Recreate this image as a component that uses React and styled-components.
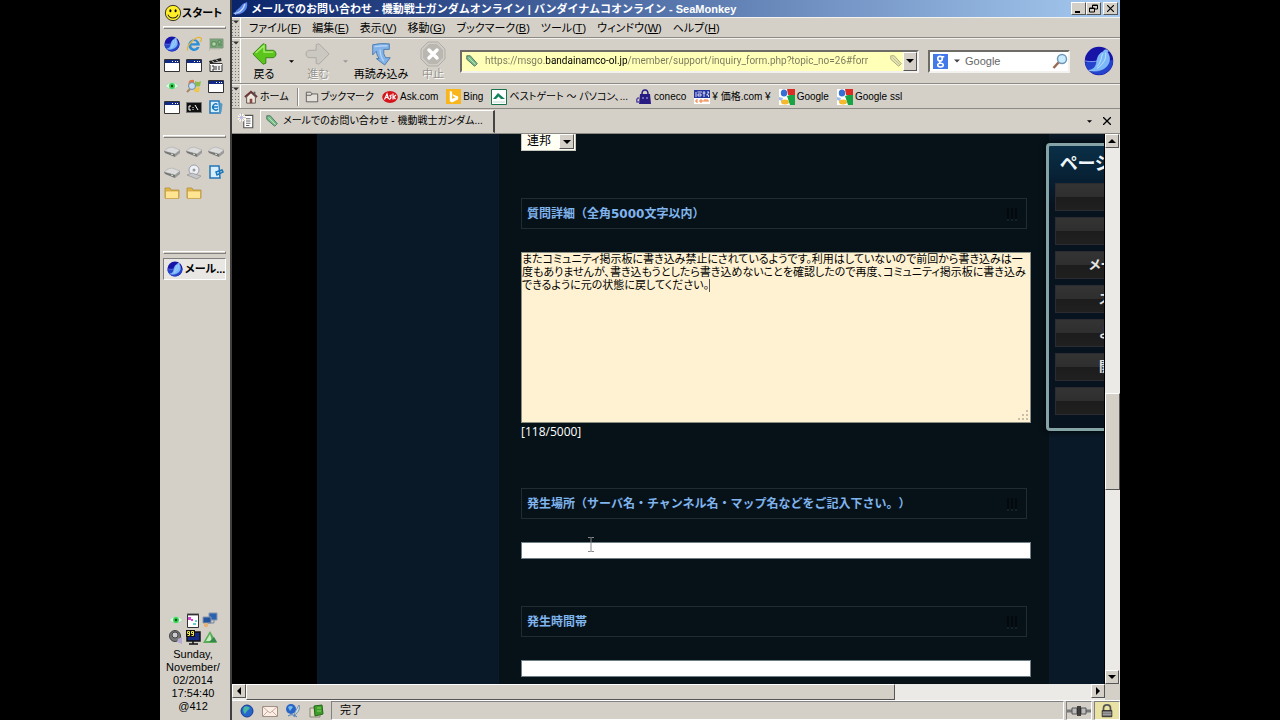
import React from "react";
import styled, { createGlobalStyle, css } from "styled-components";

const GlobalStyle = createGlobalStyle`
  * {
    box-sizing: border-box;
  }

  body {
    margin: 0;
    background: #000;
    color: #000;
    font-family: "Liberation Sans", "Noto Sans CJK JP", sans-serif;
    font-size: 11px;
    line-height: 14px;
    font-feature-settings: "palt";
  }

  button, input, select, textarea {
    margin: 0;
    padding: 0;
    border: 0;
    border-radius: 0;
    background: none;
    color: inherit;
    font: inherit;
    font-feature-settings: inherit;
  }

  a {
    color: inherit;
    text-decoration: none;
  }

  svg {
    display: block;
    flex: none;
  }
`;

const raised = css`
  border: 1px solid;
  border-color: #fff #555 #555 #fff;
  background: #d4d0c8;
`;

const sunken = css`
  border: 1px solid;
  border-color: #808080 #fff #fff #808080;
`;

const Screen = styled.div`
  display: flex;
  width: 75%;
  height: 100vh;
  margin: 0 auto;
  background: #d4d0c8;
  overflow: hidden;
`;

/* ---------- desktop bar ---------- */

const Sidebar = styled.aside`
  display: flex;
  flex-direction: column;
  flex: none;
  width: 72px;
  padding: 0 4px 7px 3px;
  border-right: 2px solid #404040;
`;

const StartButton = styled.button`
  display: flex;
  align-items: center;
  height: 26px;
  padding-left: 1px;
  font-weight: bold;
  white-space: nowrap;
`;

const Ridge = styled.hr`
  width: 100%;
  height: 3px;
  margin: 0;
  border: 1px solid;
  border-color: #fff #808080 #808080 #fff;
`;

const IconGrid = styled.div`
  display: grid;
  grid-template-columns: repeat(3, 16px);
  gap: 5px 6px;
  align-content: start;
  height: ${props => props.$height};
  padding: ${props => props.$top} 0 0 1px;

  button {
    height: 16px;
  }
`;

const TaskButton = styled.button`
  ${sunken}
  display: flex;
  align-items: center;
  gap: 2px;
  height: 22px;
  margin-top: 4px;
  padding-left: 3px;
  background: #e9e7e3;
  font-weight: bold;
  white-space: nowrap;
`;

const Tray = styled.div`
  display: grid;
  grid-template-columns: repeat(3, 16px);
  justify-content: center;
  gap: 1px;
  margin: auto 3px 0 0;
`;

const Clock = styled.div`
  margin: 3px 3px 0 0;
  line-height: 13px;
  text-align: center;
`;

/* ---------- browser chrome ---------- */

const Browser = styled.div`
  display: flex;
  flex-direction: column;
  flex: 1;
  min-width: 0;
`;

const TitleBar = styled.header`
  display: flex;
  align-items: center;
  flex: none;
  height: 17px;
  gap: 2px;
  padding: 0 2px 0 1px;
  background: linear-gradient(90deg, #0a246a, #a6caf0);
  color: #fff;

  h1 {
    flex: 1;
    margin: 0;
    font-size: 11px;
    font-weight: bold;
    font-feature-settings: normal;
    line-height: 16px;
    white-space: nowrap;
  }
`;

const WindowButton = styled.button`
  ${raised}
  display: flex;
  align-items: center;
  justify-content: center;
  width: 15px;
  height: 13px;
  color: #000;
  margin-left: ${props => (props.$apart ? "0" : "-2px")};
`;

const Bar = styled.div`
  display: flex;
  align-items: center;
  flex: none;
  height: ${props => props.$height};
  border-top: 1px solid #f4f2ee;
  border-bottom: 1px solid #8c8a84;
  white-space: nowrap;
`;

const GripBox = styled.span`
  align-self: stretch;
  flex: none;
  width: 9px;
  margin-right: 3px;
  border-right: 1px solid #fff;
  background: radial-gradient(circle, #777 30%, transparent 35%) 2px 4px / 3px 3px;

  svg {
    margin: 1px 0 0 1px;
    background: #d4d0c8;
  }
`;

const MenuItem = styled.button`
  height: 18px;
  padding: 0 6px 0 5px;

  u {
    text-underline-offset: 1px;
  }
`;

const ToolButton = styled.button`
  display: flex;
  flex-direction: column;
  align-items: center;
  flex: none;
  width: ${props => props.$width};
  color: ${props => (props.disabled ? "#96938c" : "#000")};
  text-shadow: ${props => (props.disabled ? "1px 1px #fff" : "none")};
  line-height: 14px;
`;

const DropButton = styled.button`
  display: flex;
  align-items: center;
  justify-content: center;
  flex: none;
  width: ${props => props.$width || "14px"};
  height: 24px;
`;

const FieldBox = styled.div`
  display: flex;
  align-items: center;
  flex: ${props => (props.$grow ? "1" : "none")};
  min-width: 0;
  width: ${props => props.$width};
  height: 23px;
  margin-left: ${props => props.$left};
  padding-left: 3px;
  border: 2px solid;
  border-color: #6e6c67 #f4f2ee #f4f2ee #6e6c67;
  background: ${props => (props.$secure ? "#ffffb7" : "#fff")};
  overflow: hidden;
`;

const AddressInput = styled.input`
  flex: 1;
  min-width: 0;
  margin-left: 6px;
  background: linear-gradient(90deg, #77775c 60px, #000 60px, #000 142px, #77775c 142px);
  background-clip: text;
  -webkit-background-clip: text;
  color: transparent;
  font-family: Roboto, sans-serif;
  font-size: 10px;
  outline: 0;
`;

const SearchInput = styled.input`
  flex: 1;
  min-width: 0;
  outline: 0;

  &::placeholder {
    color: #666;
    opacity: 1;
  }
`;

const ArrowButton = styled.button`
  ${raised}
  display: flex;
  align-items: center;
  justify-content: center;
  flex: none;
  width: 14px;
  height: ${props => props.$height || "14px"};
`;

const Throbber = styled.a`
  flex: none;
  margin: 0 6px 0 14px;
`;

const Bookmark = styled.a`
  display: flex;
  align-items: center;
  gap: 2px;
  margin-right: 8px;
  font-size: 10px;
`;

const Divider = styled.span`
  flex: none;
  width: 2px;
  height: 18px;
  margin-right: 6px;
  border-left: 1px solid #8c8a84;
  border-right: 1px solid #fff;
`;

const TabBar = styled.div`
  display: flex;
  align-items: center;
  flex: none;
  height: 25px;
  padding: 0 4px 0 5px;
  border-bottom: 1px solid #8c8a84;
`;

const Tab = styled.button`
  display: flex;
  align-items: center;
  gap: 4px;
  width: 235px;
  height: 23px;
  margin: 0 auto 0 5px;
  padding-left: 4px;
  border: 1px solid;
  border-color: #fff #444 transparent #fff;
  border-right-width: 2px;
  font-size: 10px;
  white-space: nowrap;
`;

/* ---------- web page ---------- */

const Viewport = styled.div`
  display: grid;
  grid-template-columns: 1fr 15px;
  grid-template-rows: 1fr 16px;
  flex: 1;
  min-height: 0;
`;

const Page = styled.main`
  position: relative;
  display: flex;
  min-width: 0;
  min-height: 0;
  background: #0a1927;
  border-left: 85px solid #000;
  border-right: 1px solid #000;
  overflow: hidden;
`;

const Column = styled.form`
  flex: 1;
  min-width: 0;
  margin: 0 55px 0 182px;
  padding: 0 18px 0 22px;
  background: #071218;
  box-shadow: 0 0 1px #132130;
`;

const SelectBox = styled.div`
  position: relative;
  width: 55px;
  height: 17px;
  border: 1px solid #c8c8c0;
  border-top: 0;
  background: #fffff4;

  select {
    display: block;
    width: 100%;
    height: 14px;
    padding-left: 5px;
    appearance: none;
    font-size: 12px;
    line-height: 14px;
    outline: 0;
  }

  span {
    ${raised}
    position: absolute;
    top: 0;
    right: 1px;
    bottom: 1px;
    display: flex;
    align-items: center;
    justify-content: center;
    width: 15px;
    pointer-events: none;
  }
`;

const Section = styled.section`
  margin-top: 47px;
`;

const Heading = styled.label`
  display: flex;
  align-items: center;
  justify-content: space-between;
  height: 31px;
  margin: 0 4px 23px 0;
  padding: 0 7px 0 5px;
  border: 1px solid #1f2d33;
  color: #80b4ee;
  font-family: "DejaVu Sans", "Noto Sans CJK JP", sans-serif;
  font-feature-settings: normal;
  text-spacing-trim: space-all;
  font-size: 12px;
  font-weight: bold;
`;

const TextField = styled.input`
  display: block;
  width: 100%;
  height: 17px;
  padding: 0 2px;
  background: #fff;
  outline: 1px solid #6f7f88;
  outline-offset: -1px;
`;

const FieldWrap = styled.div`
  position: relative;
`;

const Pointer = styled.svg`
  position: absolute;
  top: -6px;
  left: 66px;
`;

const Caret = styled.span`
  position: absolute;
  top: 27px;
  left: 188px;
  width: 1px;
  height: 13px;
  background: #555;
`;

const Details = styled.textarea`
  display: block;
  width: 100%;
  height: 171px;
  padding: 0;
  border: 1px solid #8a8f86;
  background: #fff2d2;
  line-height: 13px;
  white-space: pre;
  resize: none;
  outline: 0;
  overflow: hidden;
`;

const ResizeMark = styled.svg`
  position: absolute;
  right: 2px;
  bottom: 2px;
`;

const Counter = styled.p`
  height: 18px;
  margin: 0;
  color: #fff;
  font-family: "Open Sans", sans-serif;
  font-size: 12px;
  line-height: 18px;
`;

const SideMenu = styled.nav`
  position: absolute;
  top: 9px;
  right: 0;
  width: 58px;
  height: 288px;
  padding: 1px 0 0 6px;
  border: 3px solid #86a3a5;
  border-right: 0;
  border-radius: 4px 0 0 4px;
  background: linear-gradient(#0a3047, #071c2f 40px, #07131e 60px);
  box-shadow: 0 0 4px 2px #030b10;
  overflow: hidden;

  h2 {
    height: 36px;
    margin: 0 0 0 5px;
    color: #eef6fa;
    font-size: 18px;
    line-height: 34px;
    white-space: nowrap;
  }
`;

const SideLink = styled.a`
  display: block;
  height: 28px;
  margin-bottom: 6px;
  padding-left: ${props => props.$indent};
  border: 1px solid #2c2c30;
  border-right: 0;
  background: linear-gradient(#343434, #2e2e2e 50%, #1c1c1c 50%, #202020);
  color: #e4e4e4;
  font-size: 13px;
  font-weight: bold;
  line-height: 25px;
  white-space: nowrap;
`;

const Scrollbar = styled.div`
  display: flex;
  flex-direction: ${props => (props.$vertical ? "column" : "row")};
  min-width: 0;
  background: #eceae6;
`;

const Track = styled.div`
  flex: ${props => props.$share} 0 0;
`;

const Thumb = styled(Track)`
  ${raised}
`;

const StatusBar = styled.footer`
  display: flex;
  align-items: center;
  flex: none;
  height: 20px;
  gap: 7px;
  padding-left: 7px;
  border-top: 1px solid #fff;
`;

const StatusText = styled.span`
  ${sunken}
  flex: 1;
  height: 19px;
  padding-left: 8px;
  line-height: 17px;
`;

const StatusCell = styled.span`
  ${sunken}
  display: flex;
  align-items: center;
  justify-content: center;
  width: 26px;
  height: 19px;
  margin-left: -5px;
  background: ${props => (props.$secure ? "#e9e2a4" : "none")};
`;

/* ---------- drawings ---------- */

const Svg = ({ size = 16, children }) => (
  <svg width={size} height={size} viewBox="0 0 16 16" aria-hidden="true">{children}</svg>
);

const Arrow = ({ dir = "down", color = "#000", size = 7 }) => (
  <svg width={size} height={size} viewBox="0 0 8 8" aria-hidden="true">
    <path
      fill={color}
      d={{
        down: "M0 2h8L4 6z",
        up: "M0 6h8L4 2z",
        left: "M6 0v8L2 4z",
        right: "M2 0v8l4-4z"
      }[dir]}
    />
  </svg>
);

const Smiley = () => (
  <Svg size={18}>
    <circle cx="8" cy="8" r="6.800" fill="#ffee28" stroke="#222" strokeWidth=".8" />
    <ellipse cx="5.7" cy="6" rx=".9" ry="1.400" />
    <ellipse cx="10.3" cy="6" rx=".9" ry="1.400" />
    <path d="M3.500 9.500c1.500 4 7.500 4 9 0" fill="none" stroke="#222" strokeWidth=".9" />
  </Svg>
);

const SeaBird = ({ size = 16 }) => (
  <Svg size={size}>
    <circle cx="8" cy="8" r="7.600" fill="#1714a8" />
    <path d="M.5 9C4 7.500 6 9 15.500 7.500a7.500 7.500 0 0 1-14.500 3z" fill="#2444cc" />
    <path d="M.5 8q5 .8 7-.3" fill="none" stroke="#86a8ff" strokeWidth=".5" />
    <path d="M2.500 13c2.500-.3 4-2 4.300-4.500.4-3.500 2-5 3.400-5.300q.5-1.500 1.800-1.200l1 .8-.6.5c1.800 2.500 1.600 5.500-.6 7.800-2 2-5.200 2.500-7.300 2.200z" fill="#7ab8f8" stroke="#a4d0ff" strokeWidth=".3" />
    <path d="M11.500 3.500c.6 3-1 6-4.500 8.500M10 4c-1 2-.5 4-3 7" fill="none" stroke="#c4e2ff" strokeWidth=".5" />
  </Svg>
);

const Feather = () => (
  <Svg>
    <path d="M2 13c0-4 4-5 6-8 2-3 4-3 6-4 1 5-1 9-5 11-3 2-5 1-7 1z" fill="#5b86e8" />
    <path d="M4 12c3-1 6-3 8-9" fill="none" stroke="#c5dbff" strokeWidth="1.300" />
    <path d="M0 12l4-1-1 3z" fill="#a4c4ff" />
  </Svg>
);

const Explorer = () => (
  <Svg>
    <path d="M13.800 9.500H5.200a3 3 0 0 0 5.600 1.500h2.700A5.800 5.800 0 1 1 13.800 9.500zM5.200 7.300h5.500a2.800 2.800 0 0 0-5.500 0z" fill="#2b8ed6" fillRule="evenodd" />
    <path d="M2 14.500C-1 11 10-1 15 2c1 1 0 3-1 4" fill="none" stroke="#e8b53c" strokeWidth="1.300" />
  </Svg>
);

const Board = () => (
  <Svg>
    <path d="M2 3h13v9H2z" fill="#79a878" stroke="#7f947c" />
    <path d="M4 6h4v4H4zM10 5h3v2h-3zM10 9h4" fill="#b7d4a5" stroke="#33683c" strokeWidth=".6" />
    <path d="M1.500 2v13M3 13h9" stroke="#b8bcae" />
  </Svg>
);

const AppWindow = () => (
  <Svg>
    <path d="M.5 2.500h15v12H.5z" fill="#fff" stroke="#333" />
    <path d="M1 3h14v3H1z" fill="#102a86" />
    <path d="M8 4.500h1M11 4.500h1M13 4.500h1" stroke="#fff" />
  </Svg>
);

const Clapper = () => (
  <Svg>
    <path d="M2 6.500h12v8H2z" fill="#eee" stroke="#333" />
    <path d="M1 4l12-3 .5 3L2 6.500z" fill="#222" />
    <path d="M4 3.500l2 2M8 2.500l2 2M2 7.500h12" stroke="#fff" />
    <path d="M4 9h2v4H4M8 9v4M11 9v4" fill="none" stroke="#333" />
  </Svg>
);

const Eye = () => (
  <Svg>
    <path d="M1 8q7-7 14 0-7 6-14 0z" fill="#e6f4e8" stroke="#a8d4b0" strokeWidth=".7" />
    <circle cx="8" cy="8" r="3" fill="#36d354" />
    <circle cx="8" cy="8" r="1.200" fill="#064d10" />
  </Svg>
);

const WinFlag = () => (
  <Svg>
    <path d="M3 3q3-2 5-1v5q-3-1-6 1z" fill="#dd7a48" />
    <path d="M9 3q3 2 6 0l-1 5q-3 1-5 0z" fill="#8bbd48" />
    <path d="M9 9q3 1 5 0l-1 5q-3 1-5-1z" fill="#edc64d" />
    <circle cx="6" cy="8" r="3.500" fill="#c5dcf2" stroke="#6f8ca8" />
    <path d="M4 11l-3 3" stroke="#a5865f" strokeWidth="2" />
  </Svg>
);

const Prompt = () => (
  <Svg>
    <path d="M.5 3.500h15v10H.5z" fill="#111" stroke="#777" />
    <path d="M5 7H3v4h2M7 8v1M7 10v1M9 6l3 5" fill="none" stroke="#fff" />
  </Svg>
);

const Sync = ({ card }) => (
  <Svg>
    <path d="M2 2h9l1 12H2z" fill="#d8efff" stroke="#2575b7" strokeWidth="1.500" />
    <path d={card ? "M8 8l6-2 1 2-6 3z" : "M9.500 5.500a3 3 0 1 0 .5 4.500M5 8h5"} fill="none" stroke="#1878bd" strokeWidth="1.500" />
    {!card && <path d="M11.500 3l3 2-1 8-2.500 2z" fill="#5699c4" />}
  </Svg>
);

const Drive = () => (
  <Svg>
    <path d="M0 8q4-4 8-4l8 3-5 4z" fill="#dcdcdc" stroke="#aaa" strokeWidth=".6" />
    <path d="M0 8l11 3v3L1 10z" fill="#777" />
    <path d="M11 11l5-4v3l-5 4z" fill="#9a9a9a" />
    <path d="M7 11l2 .6" stroke="#c9e8c9" />
  </Svg>
);

const DiscDrive = () => (
  <Svg>
    <circle cx="8" cy="6" r="5" fill="#eef0f7" stroke="#8b8da0" strokeWidth=".8" />
    <circle cx="8" cy="6" r="1.500" fill="#999" />
    <path d="M1 11l5-2 9 3-4 3z" fill="#c6c6cb" stroke="#888" strokeWidth=".6" />
  </Svg>
);

const Folder = () => (
  <Svg>
    <path d="M1 3h5l1 2h8v8H1z" fill="#e3b84b" stroke="#ad842d" strokeWidth=".7" />
    <path d="M1.500 6h13v7.500h-13z" fill="#ffe592" stroke="#bf9434" strokeWidth=".6" />
  </Svg>
);

const Notebook = () => (
  <Svg>
    <path d="M2.500 2.500h11v13h-11z" fill="#fff" stroke="#333" />
    <path d="M3 1v3M5 1v3M7 1v3M9 1v3M11 1v3M13 1v3" stroke="#333" strokeWidth=".8" />
    <path d="M3 5h3v3H3zM6 7h2v2H6z" fill="#d449cf" />
    <path d="M8 11h3v2H8zM10 8h2v2h-2z" fill="#64cfc4" />
  </Svg>
);

const Network = () => (
  <Svg>
    <path d="M7 1h8v7H7z" fill="#2b62b0" stroke="#8797ac" />
    <path d="M1 5h8v6H1z" fill="#23539c" stroke="#8797ac" />
    <circle cx="4" cy="13" r="2.200" fill="#e3b274" />
    <path d="M12 8v3H6" fill="none" stroke="#75869c" />
  </Svg>
);

const Speaker = () => (
  <Svg>
    <circle cx="7" cy="7" r="5.500" fill="#777" stroke="#444" />
    <circle cx="7" cy="6" r="3" fill="#ccc" stroke="#444" />
    <path d="M10 10l4-2v7l-5-2z" fill="#b6abd2" />
  </Svg>
);

const Monitor = () => (
  <Svg>
    <path d="M2 3h13v9H2z" fill="#142b86" stroke="#111" strokeWidth="1.500" />
    <path d="M1 1h9v7H1z" fill="#111" />
    <path d="M4 4.500H2.500v-2H4.500v4h-2M8 4.500H6.500v-2h2v4h-2" fill="none" stroke="#f3e84a" />
    <path d="M8 12v3M4 15h9" stroke="#111" strokeWidth="1.500" />
  </Svg>
);

const Peak = () => (
  <Svg>
    <path d="M1 14L8 2l7 12z" fill="#58ac57" />
    <path d="M4 12l4-7 2 7z" fill="#c6ecc2" />
    <path d="M7 13l5-5 3 5z" fill="#368748" />
  </Svg>
);

const GreenArrow = () => (
  <svg width="26" height="26" viewBox="0 0 28 26" aria-hidden="true">
    <path d="M2 13L13 2l3 1v6h8q3 1 3 4t-3 4h-8v6l-3 1z" fill="#5cc51c" stroke="#34821a" strokeLinejoin="round" />
    <path d="M5 12l9-8v7h10" fill="none" stroke="#a8ec70" strokeWidth="1.500" />
  </svg>
);

const GreyArrow = () => (
  <svg width="26" height="26" viewBox="0 0 28 26" aria-hidden="true">
    <path d="M26 13L15 2l-3 1v6H4q-3 1-3 4t3 4h8v6l3 1z" fill="#cbc8c2" stroke="#aaa7a1" strokeLinejoin="round" />
  </svg>
);

const ReloadArrow = () => (
  <svg width="24" height="26" viewBox="0 0 26 26" aria-hidden="true">
    <path d="M4 3q8-2 18-1v6h-6q-1 5 2 9h5l-6 8-9-7h3q-3-4-3-8l-4 4z" fill="#82b2e8" stroke="#4b78ad" strokeLinejoin="round" />
    <path d="M6 5q7-1 14-1M12 8q0 7 4 13" fill="none" stroke="#b4d4f8" strokeWidth="1.500" />
  </svg>
);

const StopSign = () => (
  <svg width="26" height="26" viewBox="0 0 26 26" aria-hidden="true">
    <path d="M8 1h10l7 7v10l-7 7H8l-7-7V8z" fill="#cfccc6" stroke="#b0ada7" />
    <path d="M9 3h8l6 6v8l-6 6H9l-6-6V9z" fill="#bab7b1" />
    <path d="M9 9l8 8M17 9l-8 8" stroke="#fff" strokeWidth="3.500" strokeLinecap="round" />
  </svg>
);

const Pencil = ({ faded }) => (
  <Svg size={14}>
    <path d="M2 2l4 0 8 9-3 3-9-8z" fill={faded ? "#e4e4ac" : "#7bb98a"} stroke={faded ? "#a3a380" : "#42735a"} />
    <path d="M4 4l8 8" stroke={faded ? "#bcbb94" : "#c0efb8"} />
  </Svg>
);

const SearchGoogle = () => (
  <Svg size={15}>
    <path d="M0 0h16v16H0z" fill="#4378e8" />
    <circle cx="7.500" cy="5" r="2.400" fill="none" stroke="#fff" strokeWidth="1.800" />
    <path d="M9 3h3M8 8q-2 1 0 2" fill="none" stroke="#fff" strokeWidth="1.500" />
    <ellipse cx="8" cy="11.800" rx="3" ry="2" fill="none" stroke="#fff" strokeWidth="1.600" />
  </Svg>
);

const Magnifier = () => (
  <Svg>
    <circle cx="10" cy="6" r="4.500" fill="#c9ecff" stroke="#7197b5" strokeWidth="1.500" />
    <path d="M6.500 9.500L1.500 15" stroke="#9b6a55" strokeWidth="2.500" />
  </Svg>
);

const Home = () => (
  <Svg size={14}>
    <path d="M3 8v7h10V8L8 3z" fill="#eee8df" stroke="#554842" />
    <path d="M1 8l7-6 7 6" fill="none" stroke="#6e3434" strokeWidth="2" />
    <path d="M6.500 10h3v5h-3z" fill="#8b4840" />
    <path d="M12 2v4" stroke="#555" strokeWidth="2" />
  </Svg>
);

const FolderOutline = () => (
  <Svg size={14}>
    <path d="M1.500 13.500v-11h5l1.500 2h6.500v9zM1.500 6h5.500l1-1.500" fill="#e3e0da" stroke="#555" />
  </Svg>
);

const Ask = () => (
  <Svg>
    <ellipse cx="8" cy="8" rx="7.800" ry="6" fill="#d4151c" />
    <path d="M2.500 10.500L5 5l1.500 5M4 8.500h2M10 6q-3 0-1.500 1.500T7 10.500M11 4.500v6M14 6l-2.500 2 2 2" fill="none" stroke="#fff" strokeWidth="1.200" />
  </Svg>
);

const Bing = () => (
  <Svg size={15}>
    <path d="M0 0h16v16H0z" fill="#f9b51c" />
    <path d="M4 2l2.500 1v7.500L10 9 7.500 7.500 6.800 5.500 13 8v3l-6.500 3.500L4 13z" fill="#fff" />
  </Svg>
);

const BestGate = () => (
  <Svg>
    <path d="M.5.5h15v15H.5z" fill="#fff" stroke="#18734f" />
    <path d="M2 10l5-6 7 6h-4L7.500 7.500 5 10z" fill="#12845b" />
    <path d="M2 13h12" stroke="#b9dccd" />
  </Svg>
);

const Bag = () => (
  <Svg>
    <path d="M4 5h10l1 10H3z" fill="#281b82" />
    <path d="M6 5q0-4 3-4t3 4" fill="none" stroke="#281b82" strokeWidth="1.500" />
    <path d="M3 9q-3 0-2 4h3" fill="none" stroke="#594ca1" strokeWidth="1.500" />
    <path d="M7 8v2M11 8v2" stroke="#b8b2e2" />
  </Svg>
);

const Kakaku = () => (
  <Svg>
    <path d="M0 1h16v14H0z" fill="#fff" />
    <path d="M0 1h16v8H0z" fill="#2636a0" />
    <path d="M2 3v5M3.500 3H8M4 5h3v2H4zM10 2v6M8.500 4h3M13 3h2l-2 3M12.500 6h2v2" fill="none" stroke="#fff" strokeWidth=".8" />
    <path d="M4 11H2v2h2M6 11h2v2H6zM10 13v-2h2v2M12 11h2v2" fill="none" stroke="#ef7b3b" />
  </Svg>
);

const GoogleTile = () => (
  <Svg>
    <path d="M0 0h16v16H0z" fill="#fff" />
    <path d="M8 0h8v6H9z" fill="#da2d23" />
    <path d="M8 7l3-1h5v10h-5z" fill="#18a344" />
    <path d="M0 8l4 1-1 3-3-1z" fill="#9dbdf1" />
    <ellipse cx="5" cy="4" rx="3.200" ry="3.500" fill="#356fd5" />
    <ellipse cx="6" cy="13" rx="4" ry="2.500" fill="#f4b92c" />
  </Svg>
);

const NewTab = () => (
  <Svg size={18}>
    <path d="M6 3h8v11H6z" fill="#fff" stroke="#555" />
    <path d="M8 6h4M8 8h4M8 10h4M8 12h3" stroke="#555" strokeWidth=".8" />
    <circle cx="4" cy="5" r="3.500" fill="#fffbd0" />
    <path d="M4 1v8M0 5h8M1 2l6 6M7 2L1 8" stroke="#b8b5ea" strokeWidth=".8" />
  </Svg>
);

const Cross = ({ size = 8 }) => (
  <svg width={size} height={size} viewBox="0 0 8 8" aria-hidden="true">
    <path d="M0 0l8 8M8 0L0 8" stroke="#000" strokeWidth="1.300" />
  </svg>
);

const Globe = () => (
  <Svg>
    <circle cx="8" cy="8" r="6" fill="#2665c9" stroke="#183a94" />
    <path d="M5 4q3-2 6 1l-3 3-2 3q-3-3-1-7z" fill="#48b8a1" />
  </Svg>
);

const Envelope = () => (
  <Svg>
    <path d="M.5 3.500h15v10H.5z" fill="#fbeee5" stroke="#a28e82" />
    <path d="M1 4l7 6 7-6M1 13l5-5M15 13l-5-5" fill="none" stroke="#c7aca0" />
  </Svg>
);

const Composer = () => (
  <Svg>
    <circle cx="6" cy="6" r="5" fill="#2865c7" />
    <path d="M3 4q3-2 5 0L5 8z" fill="#75bbe8" />
    <path d="M14 2q2 4-3 9l-2 3 1-5z" fill="#c8def2" stroke="#547591" strokeWidth=".7" />
    <path d="M3 13q4-3 9 1" fill="none" stroke="#477bba" />
  </Svg>
);

const AddressBook = () => (
  <Svg>
    <path d="M2 5h10v9H2z" fill="#dedbc8" stroke="#878472" />
    <path d="M6 3l8-1 1 9-8 2z" fill="#3f9d29" stroke="#23671a" />
    <path d="M9 5h4M9 8h4" stroke="#8ad46a" />
  </Svg>
);

const Plug = () => (
  <svg width="24" height="12" viewBox="0 0 24 12" aria-hidden="true">
    <path d="M0 6h6M18 6h6" stroke="#777" strokeWidth="3" />
    <path d="M5 3h5v6H5zM14 3h5v6h-5z" fill="#bbb" stroke="#555" />
    <path d="M11 1v10M13 1v10" stroke="#111" strokeWidth="1.500" />
  </svg>
);

const Lock = () => (
  <Svg size={14}>
    <path d="M4 8V5q0-4 4-4t4 4v3" fill="none" stroke="#555" strokeWidth="2" />
    <path d="M2.500 7.500h11v7h-11z" fill="#777" stroke="#222" />
    <path d="M3 10h10M3 12h10" stroke="#bbb" strokeWidth=".7" />
  </Svg>
);

const Bars = () => (
  <svg width="14" height="14" viewBox="0 0 14 14" aria-hidden="true">
    <path d="M3 1v11M7 1v11M11 1v11" stroke="#03090d" strokeWidth="2" />
    <path d="M2 13h2M6 13h2M10 13h2" stroke="#223036" />
  </svg>
);

const Grip = () => (
  <GripBox>
    <Arrow size={6} color="#333" />
  </GripBox>
);

/* ---------- content ---------- */

const launchers = [
  ["SeaMonkey", SeaBird], ["Explorer", Explorer], ["Board", Board],
  ["Window 1", AppWindow], ["Window 2", AppWindow], ["Clapper", Clapper],
  ["Eye", Eye], ["Windows", WinFlag], ["Window 3", AppWindow],
  ["Window 4", AppWindow], ["Prompt", Prompt], ["Sync", Sync]
];

const places = [
  ["Drive 1", Drive], ["Drive 2", Drive], ["Drive 3", Drive],
  ["Drive 4", Drive], ["Disc", DiscDrive], ["Card", () => <Sync card />],
  ["Folder 1", Folder], ["Folder 2", Folder]
];

const tray = [Eye, Notebook, Network, Speaker, Monitor, Peak];

const menus = [
  ["ファイル", "F"], ["編集", "E"], ["表示", "V"], ["移動", "G"],
  ["ブックマーク", "B"], ["ツール", "T"], ["ウィンドウ", "W"], ["ヘルプ", "H"]
];

const bookmarks = [
  ["ブックマーク", FolderOutline],
  ["Ask.com", Ask],
  ["Bing", Bing],
  ["ベストゲート ～ パソコン、...", BestGate],
  ["coneco", Bag],
  ["¥ 価格.com ¥", Kakaku],
  ["Google", GoogleTile],
  ["Google ssl", GoogleTile]
];

const sideLinks = [
  ["", "0"], ["", "0"], ["メー", "33px"], ["ス", "43px"],
  ["よ", "43px"], ["開", "43px"], ["", "0"]
];

const details = [
  "またコミュニティ掲示板に書き込み禁止にされているようです。利用はしていないので前回から書き込みは一",
  "度もありませんが、書き込もうとしたら書き込めないことを確認したので再度、コミュニティ掲示板に書き込み",
  "できるように元の状態に戻してください。"
].join("\n");

const Launcher = ({ items, height, top }) => (
  <IconGrid $height={height} $top={top}>
    {items.map(([name, Icon]) => (
      <button key={name} type="button" aria-label={name}><Icon /></button>
    ))}
  </IconGrid>
);

const App = () => (
  <Screen>
    <GlobalStyle />
    <Sidebar>
      <StartButton type="button"><Smiley />スタート</StartButton>
      <Ridge />
      <Launcher items={launchers} height="106px" top="7px" />
      <Ridge />
      <Launcher items={places} height="113px" top="5px" />
      <Ridge />
      <TaskButton type="button"><SeaBird />メール...</TaskButton>
      <Tray>
        {tray.map((Icon, i) => <Icon key={i} />)}
      </Tray>
      <Clock>
        Sunday,<br />November/<br />02/2014<br />17:54:40<br />@412
      </Clock>
    </Sidebar>

    <Browser>
      <TitleBar>
        <Feather />
        <h1>メールでのお問い合わせ - 機動戦士ガンダムオンライン | バンダイナムコオンライン - SeaMonkey</h1>
        <WindowButton type="button" aria-label="最小化">
          <svg width="9" height="9" viewBox="0 0 9 9"><path d="M1 7h5v2H1z" /></svg>
        </WindowButton>
        <WindowButton type="button" aria-label="元に戻す">
          <svg width="9" height="9" viewBox="0 0 9 9">
            <path d="M3.500 4V1h5v4H6M.5 4h5v4h-5zM3 1.500h6M0 4.500h6" fill="none" stroke="#000" />
          </svg>
        </WindowButton>
        <WindowButton type="button" aria-label="閉じる" $apart><Cross size={7} /></WindowButton>
      </TitleBar>

      <Bar as="nav" $height="21px">
        <Grip />
        {menus.map(([label, key]) => (
          <MenuItem key={key} type="button">{label}(<u>{key}</u>)</MenuItem>
        ))}
      </Bar>

      <Bar $height="46px">
        <Grip />
        <ToolButton type="button" $width="40px"><GreenArrow />戻る</ToolButton>
        <DropButton type="button" aria-label="戻る履歴"><Arrow size={5} /></DropButton>
        <ToolButton type="button" $width="40px" disabled><GreyArrow />進む</ToolButton>
        <DropButton type="button" aria-label="進む履歴" disabled><Arrow size={5} color="#999" /></DropButton>
        <ToolButton type="button" $width="58px"><ReloadArrow />再読み込み</ToolButton>
        <ToolButton type="button" $width="46px" disabled><StopSign />中止</ToolButton>
        <FieldBox $grow $secure $left="4px">
          <Pencil />
          <AddressInput
            aria-label="アドレス"
            defaultValue="https://msgo.bandainamco-ol.jp/member/support/inquiry_form.php?topic_no=26#forr"
          />
          <Pencil faded />
          <ArrowButton type="button" aria-label="履歴" $height="19px"><Arrow size={8} /></ArrowButton>
        </FieldBox>
        <FieldBox $width="142px" $left="9px">
          <SearchGoogle />
          <DropButton type="button" aria-label="検索エンジン" $width="17px"><Arrow size={6} color="#444" /></DropButton>
          <SearchInput aria-label="検索" placeholder="Google" />
          <Magnifier />
        </FieldBox>
        <Throbber href="#top" aria-label="SeaMonkey"><SeaBird size={30} /></Throbber>
      </Bar>

      <Bar $height="25px">
        <Grip />
        <Bookmark href="#home"><Home />ホーム</Bookmark>
        <Divider />
        {bookmarks.map(([label, Icon]) => (
          <Bookmark key={label} href="#bookmark"><Icon />{label}</Bookmark>
        ))}
      </Bar>

      <TabBar>
        <button type="button" aria-label="新しいタブ"><NewTab /></button>
        <Tab type="button"><Pencil />メールでのお問い合わせ - 機動戦士ガンダム...</Tab>
        <DropButton type="button" aria-label="タブ一覧" $width="18px"><Arrow size={5} /></DropButton>
        <DropButton type="button" aria-label="タブを閉じる" $width="18px"><Cross /></DropButton>
      </TabBar>

      <Viewport>
        <Page>
          <Column>
            <SelectBox>
              <select aria-label="所属" defaultValue="連邦">
                <option>連邦</option>
              </select>
              <span><Arrow size={8} /></span>
            </SelectBox>
            <Section>
              <Heading htmlFor="details">質問詳細（全角5000文字以内）<Bars /></Heading>
              <FieldWrap>
                <Details id="details" defaultValue={details} />
                <Caret />
                <ResizeMark width="11" height="11" viewBox="0 0 11 11">
                  <path d="M8 1h2M4 5h2M8 5h2M0 9h2M4 9h2M8 9h2" stroke="#c9bfa8" strokeWidth="2" />
                </ResizeMark>
              </FieldWrap>
              <Counter>[118/5000]</Counter>
            </Section>
            <Section>
              <Heading htmlFor="place">
                発生場所（サーバ名・チャンネル名・マップ名などをご記入下さい。）<Bars />
              </Heading>
              <FieldWrap>
                <TextField id="place" />
                <Pointer width="8" height="17" viewBox="0 0 8 17">
                  <path d="M1 1.500h2.500l.5.500.5-.500H7M1 15.500h2.500l.5-.500.5.500H7M4 2v13" fill="none" stroke="#85898b" />
                </Pointer>
              </FieldWrap>
            </Section>
            <Section>
              <Heading htmlFor="time">発生時間帯<Bars /></Heading>
              <TextField id="time" />
            </Section>
          </Column>
          <SideMenu>
            <h2>ページ</h2>
            {sideLinks.map(([label, indent], i) => (
              <SideLink key={i} href="#menu" $indent={indent}>{label}</SideLink>
            ))}
          </SideMenu>
        </Page>

        <Scrollbar $vertical>
          <ArrowButton type="button" aria-label="上へ"><Arrow dir="up" size={8} /></ArrowButton>
          <Track $share={246} />
          <Thumb $share={95} />
          <Track $share={181} />
          <ArrowButton type="button" aria-label="下へ"><Arrow size={8} /></ArrowButton>
        </Scrollbar>

        <Scrollbar>
          <ArrowButton type="button" aria-label="左へ"><Arrow dir="left" size={8} /></ArrowButton>
          <Thumb $share={647} />
          <Track $share={196} />
          <ArrowButton type="button" aria-label="右へ"><Arrow dir="right" size={8} /></ArrowButton>
        </Scrollbar>
      </Viewport>

      <StatusBar>
        <Globe />
        <Envelope />
        <Composer />
        <AddressBook />
        <StatusText>完了</StatusText>
        <StatusCell><Plug /></StatusCell>
        <StatusCell $secure><Lock /></StatusCell>
      </StatusBar>
    </Browser>
  </Screen>
);

export default App;
